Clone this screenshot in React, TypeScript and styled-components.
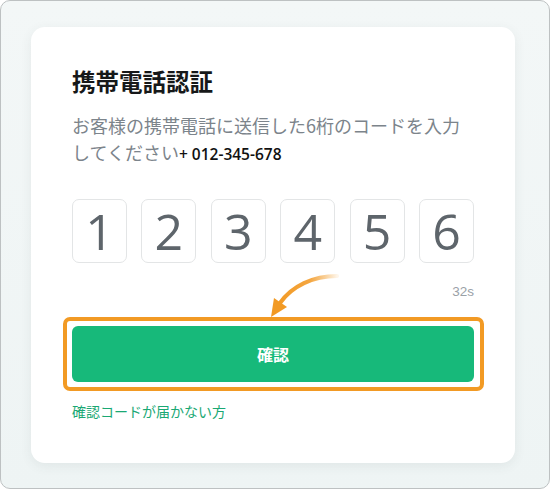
import React from 'react';
import styled, { createGlobalStyle } from 'styled-components';

const GlobalStyle = createGlobalStyle`
  html, body {
    margin: 0;
    padding: 0;
    background: #ffffff;
  }
  * {
    box-sizing: border-box;
  }
`;

const Frame = styled.div`
  width: 550px;
  height: 489px;
  border: 1px solid #bdc1c2;
  border-radius: 10px;
  background: linear-gradient(180deg, #f3f7f7 0%, #eef4f4 100%);
  padding: 26px 34px 25px 30px;
  display: flex;
`;

const Card = styled.div`
  position: relative;
  flex: 1;
  background: #ffffff;
  border-radius: 14px;
  box-shadow: 0 3px 12px rgba(60, 80, 80, 0.08);
  padding: 38px 41px 0 41px;
  display: flex;
  flex-direction: column;
  font-family: 'Noto Sans CJK JP', 'Noto Sans', sans-serif;
`;

const Title = styled.h1`
  margin: 0;
  font-size: 23.5px;
  line-height: 32px;
  font-weight: 700;
  color: #161819;
`;

const Lead = styled.p`
  margin: 15px 0 0;
  font-size: 18px;
  line-height: 27px;
  color: #7c848b;
`;

const Phone = styled.span`
  font-family: 'Open Sans', 'Noto Sans', sans-serif;
  font-size: 15.5px;
  font-weight: 600;
  color: #111;
`;

const Digits = styled.div`
  margin-top: 31px;
  display: flex;
  justify-content: space-between;
`;

const DigitBox = styled.div`
  width: 55px;
  height: 64px;
  border: 1px solid #e3e5e6;
  border-radius: 7px;
  display: flex;
  align-items: center;
  justify-content: center;
  font-family: 'Open Sans', 'Noto Sans', sans-serif;
  font-size: 50px;
  font-weight: 400;
  color: #5e656b;
  line-height: 1;
`;

const Timer = styled.div`
  margin-top: 20px;
  text-align: right;
  font-family: 'Liberation Sans', Arial, sans-serif;
  font-size: 13.5px;
  line-height: 18px;
  color: #9aa1a7;
`;

const Highlight = styled.div`
  margin: 16px -10px 0 -9px;
  border: 4px solid #f29a24;
  border-radius: 7px;
  padding: 5px 6px 5px 5px;
`;

const ConfirmButton = styled.button`
  width: 100%;
  height: 56px;
  border: none;
  border-radius: 6px;
  background: #17b97a;
  color: #ffffff;
  font-family: 'Noto Sans CJK JP', 'Noto Sans', sans-serif;
  font-size: 16px;
  font-weight: 700;
  cursor: pointer;
`;

const HelpLink = styled.a`
  margin-top: 10px;
  font-size: 14px;
  line-height: 20px;
  color: #1aa874;
  text-decoration: none;
`;

const Arrow = styled.svg`
  position: absolute;
  left: 232px;
  top: 244px;
  width: 76px;
  height: 50px;
  pointer-events: none;
`;

const digits = ['1', '2', '3', '4', '5', '6'];

export default function App() {
  return (
    <>
      <GlobalStyle />
      <Frame>
        <Card>
          <Title>携帯電話認証</Title>
          <Lead>
            お客様の携帯電話に送信した6桁のコードを入力
            <br />
            してください<Phone>+ 012-345-678</Phone>
          </Lead>
          <Digits>
            {digits.map((d) => (
              <DigitBox key={d}>{d}</DigitBox>
            ))}
          </Digits>
          <Timer>32s</Timer>
          <Highlight>
            <ConfirmButton>確認</ConfirmButton>
          </Highlight>
          <HelpLink href="#">確認コードが届かない方</HelpLink>
          <Arrow viewBox="0 0 76 50">
            <defs>
              <linearGradient id="arrowFade" x1="14" y1="0" x2="74" y2="0" gradientUnits="userSpaceOnUse">
                <stop offset="0" stopColor="#f29a24" />
                <stop offset="0.55" stopColor="#f4a640" />
                <stop offset="1" stopColor="#f29a24" stopOpacity="0.1" />
              </linearGradient>
            </defs>
            <path d="M74 5 C 50 5, 29 15, 17 32" fill="none" stroke="url(#arrowFade)" strokeWidth="4" strokeLinecap="round" />
            <polygon points="8,46 11,27 24,36" fill="#f29a24" />
          </Arrow>
        </Card>
      </Frame>
    </>
  );
}
